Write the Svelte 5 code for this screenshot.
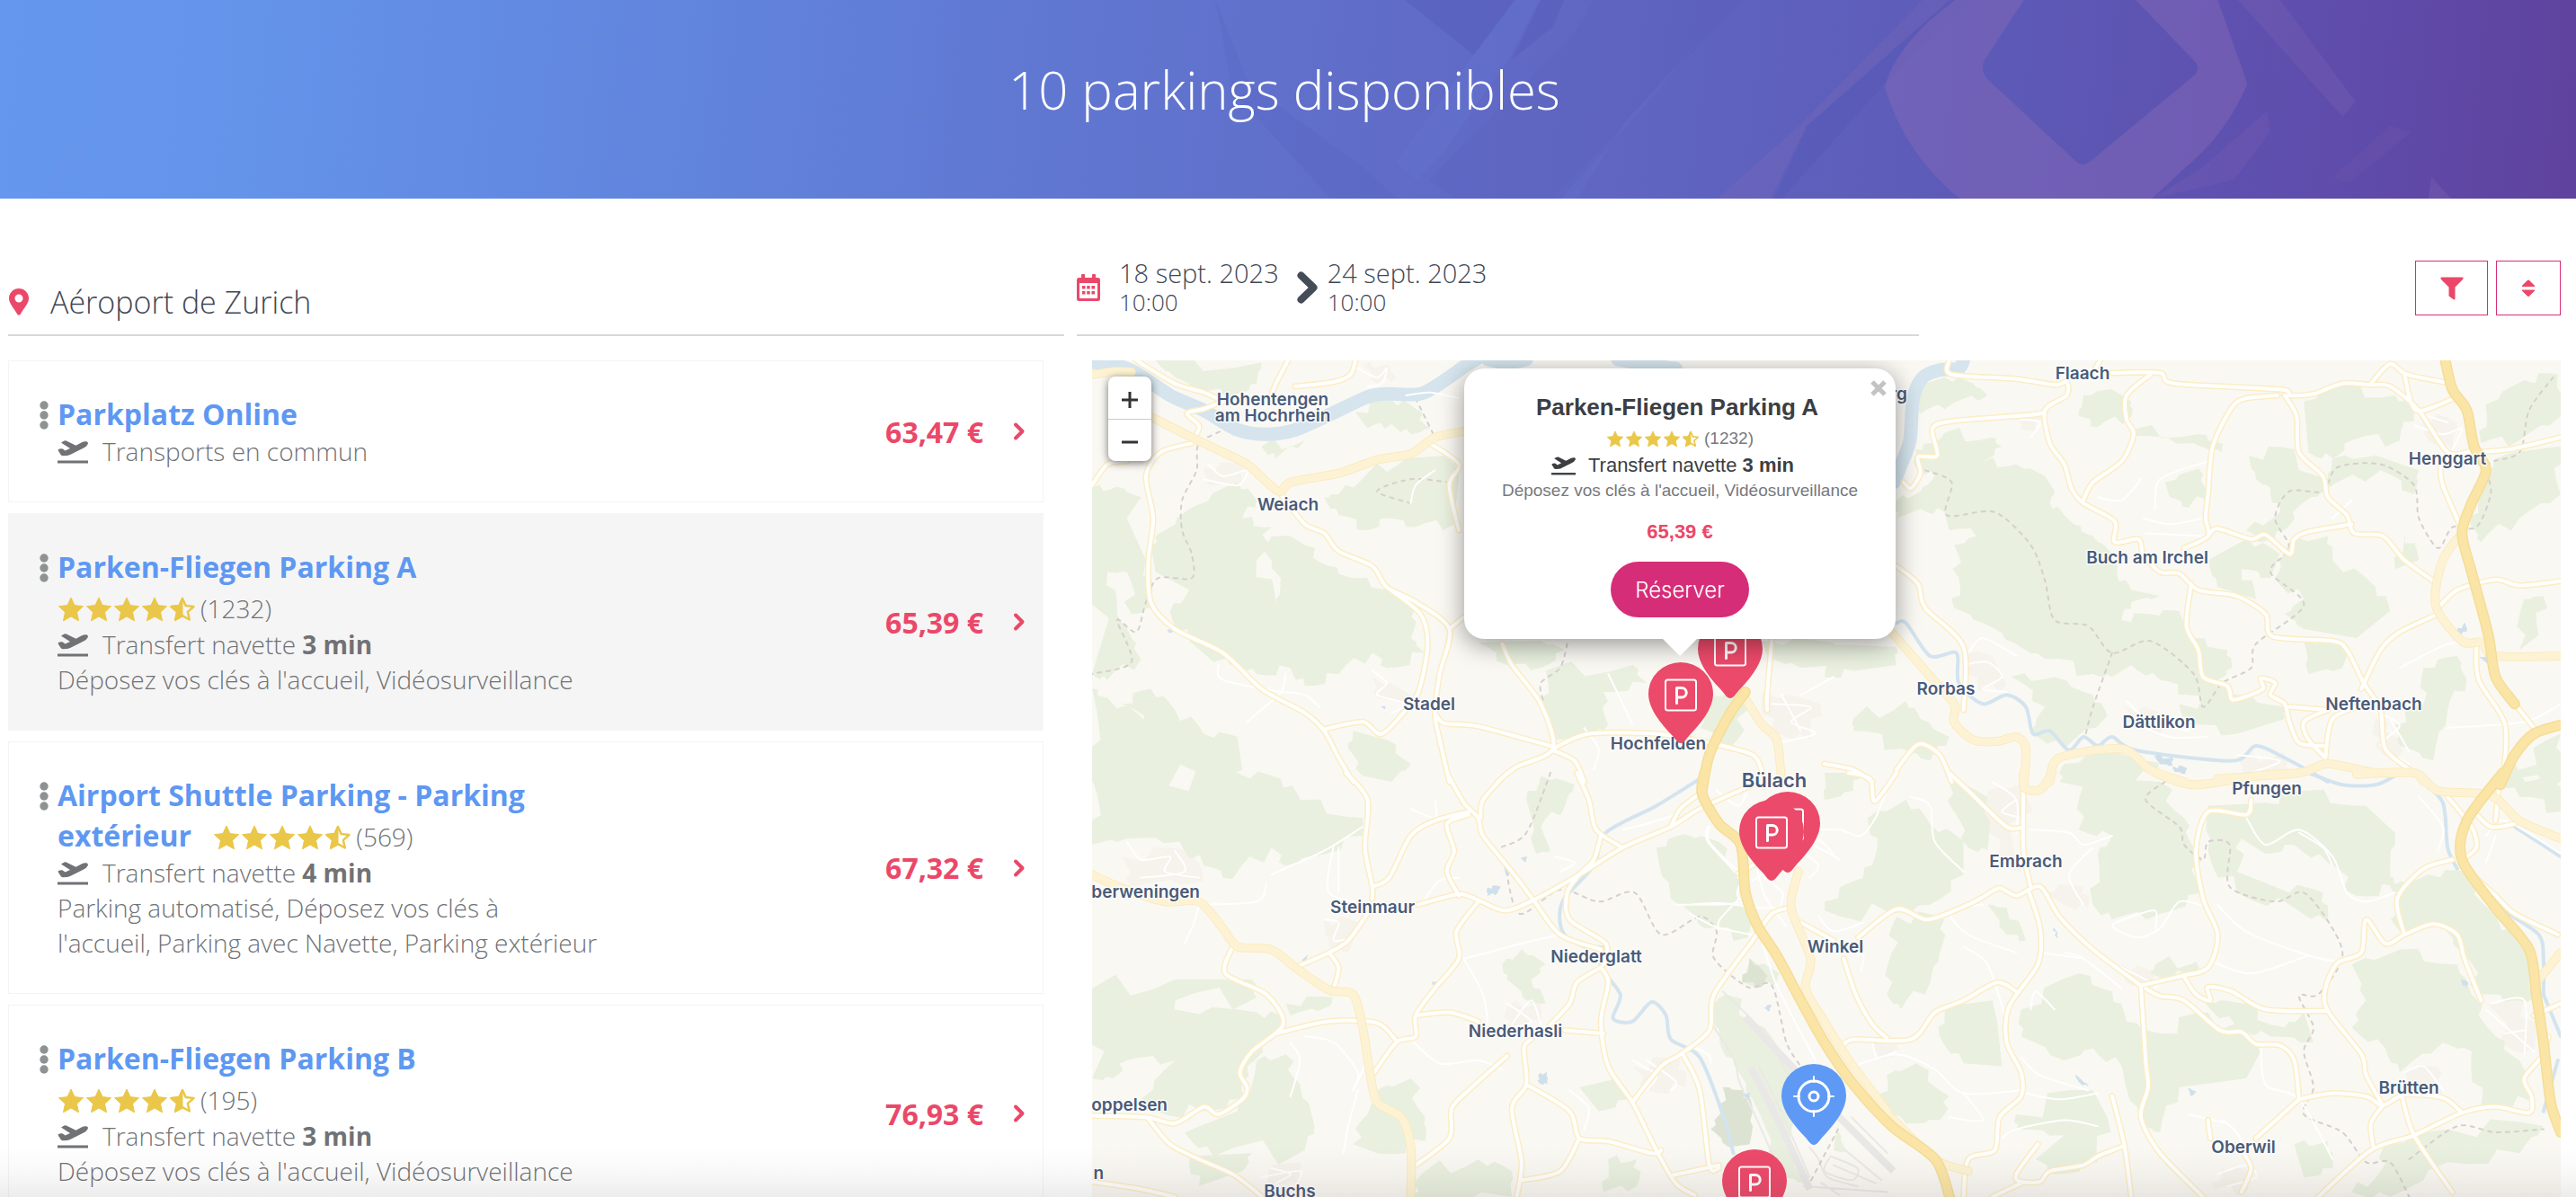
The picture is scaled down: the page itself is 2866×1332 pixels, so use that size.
<script>
  // ---- listing -------------------------------------------------------------
  const parkings = [
    { name: 'Parkplatz Online', transfer: 'Transports en commun', price: '63,47 €' },
    {
      name: 'Parken-Fliegen Parking A',
      reviews: 1232,
      transfer: 'Transfert navette',
      minutes: 3,
      features: "Déposez vos clés à l'accueil, Vidéosurveillance",
      price: '65,39 €',
      active: true
    },
    {
      name: 'Airport Shuttle Parking - Parking extérieur',
      reviews: 569,
      transfer: 'Transfert navette',
      minutes: 4,
      features: "Parking automatisé, Déposez vos clés à\nl'accueil, Parking avec Navette, Parking extérieur",
      price: '67,32 €'
    },
    {
      name: 'Parken-Fliegen Parking B',
      reviews: 195,
      transfer: 'Transfert navette',
      minutes: 3,
      features: "Déposez vos clés à l'accueil, Vidéosurveillance",
      price: '76,93 €'
    }
  ];
  const selected = parkings[1];

  // ---- map -----------------------------------------------------------------
  // Each tile has its own grid; [offset x, offset y, scale x, scale y] places it on the map.
  const tiles = {
    nw: [-15, -11, 0.5357, 0.3333],
    ne: [815, -11, 0.5332, 0.3333],
    sw: [-15, 459, 0.5357, 0.3333],
    se: [815, 459, 0.5332, 0.3333],
    apt: [665, 449, 0.3333, 0.3333]
  };

  function project(tile, text) {
    const [ox, oy, sx, sy] = tiles[tile];
    return text.trim().split(/\s+/).map((pair) => {
      const [x, y] = pair.split(',').map(Number);
      return [ox + x * sx, oy + y * sy];
    });
  }

  const at = (p) => `${p[0].toFixed(1)} ${p[1].toFixed(1)}`;

  // Rounds the corners of a line by passing curves through its points.
  function smooth(points) {
    let d = `M${at(points[0])}`;
    for (let i = 0; i < points.length - 1; i++) {
      const a = points[i - 1] ?? points[i];
      const b = points[i];
      const c = points[i + 1];
      const e = points[i + 2] ?? c;
      const c1 = [b[0] + (c[0] - a[0]) / 7, b[1] + (c[1] - a[1]) / 7];
      const c2 = [c[0] - (e[0] - b[0]) / 7, c[1] - (e[1] - b[1]) / 7];
      d += `C${at(c1)} ${at(c2)} ${at(c)}`;
    }
    return d;
  }

  // Forest edges get small notches so that they look irregular.
  function forest(points) {
    const out = [];
    points.forEach((p, i) => {
      const q = points[(i + 1) % points.length];
      const dx = q[0] - p[0];
      const dy = q[1] - p[1];
      const k = (((i * 37 + Math.round(p[0])) % 7) - 3) / 22;
      out.push(p);
      out.push([p[0] + dx * 0.3 - dy * k, p[1] + dy * 0.3 + dx * k]);
      out.push([p[0] + dx * 0.45 + dy * k, p[1] + dy * 0.45 - dx * k]);
      out.push([p[0] + dx * 0.75 + dy * k * 0.6, p[1] + dy * 0.75 - dx * k * 0.6]);
    });
    return `M${out.map(at).join('L')}Z`;
  }

  const layer = (source, draw = smooth) =>
    Object.entries(source)
      .flatMap(([tile, shapes]) => shapes.map((s) => draw(project(tile, s))))
      .join('');

  const forests = layer(
    {
      nw: [
        '160,35 380,40 370,110 330,145 250,145 200,90',
        '575,205 650,165 700,195 730,260 690,280 650,245 600,260',
        '540,480 600,410 680,360 770,350 790,420 780,580 700,590 640,560 600,600 540,550 510,490',
        '180,600 240,520 330,440 370,500 340,560 400,590 370,700 410,860 420,760 370,640 440,620 470,650 520,720 570,760 660,800 700,860 690,960 720,1010 640,1060 610,1010 540,1080 470,1120 440,1060 370,1080 330,1040 280,1040 230,970 190,870 230,800 160,740 150,650',
        '28,460 80,455 130,490 100,560 140,700 150,860 110,880 100,740 60,740 80,880 110,960 130,1030 60,1100 28,1080',
        '28,1130 60,1160 140,1240 160,1280 90,1180 150,1130 200,1200 260,1280 330,1290 340,1400 290,1440 28,1440',
        '970,1070 1150,1050 1180,1110 1090,1140 1100,1250 1060,1290 990,1300 970,1200',
        '830,975 960,970 1010,1000 960,1060 890,1050',
        '570,1270 640,1300 690,1380 650,1440 590,1420 560,1330',
        '1310,1180 1360,1110 1390,1200 1350,1330 1290,1260',
        '380,320 470,300 410,360',
        '1420,970 1568,975 1568,1050 1500,1060 1430,1020'
      ],
      ne: [
        '210,110 250,90 310,110 340,150 270,175 200,210 190,180',
        '190,330 230,310 250,275 350,290 370,320 330,370 400,380 460,420 480,470 470,510 500,550 520,580 560,620 600,680 610,750 640,800 700,820 640,840 620,900 680,880 740,870 770,960 840,1000 850,1060 820,1100 850,1130 830,1190 760,1150 700,1100 640,1050 600,1090 560,1080 460,1030 400,980 330,910 270,860 280,760 270,650 340,610 260,600 250,540 200,530 150,560 150,500 200,470 230,420 190,390',
        '540,150 600,130 640,170 640,220 570,255 530,220',
        '640,265 780,280 830,310 830,340 770,310 650,285',
        '1000,170 1080,120 1190,150 1230,200 1200,300 1100,300 1060,360 1010,340',
        '885,350 980,330 990,400 1050,430 1060,360 1150,350 1240,400 1230,480 1160,400 1040,470 990,520 960,600 910,640 880,600 950,540 930,460 900,430',
        '710,440 780,395 800,470 760,525 720,490',
        '800,700 880,630 950,680 930,760 870,730 900,830 820,790',
        '970,640 1050,620 1060,700 1150,790 1180,870 1110,960 1000,930 960,880 1000,830 940,760',
        '1380,180 1460,100 1530,80 1536,220 1450,300 1370,310',
        '1370,400 1440,340 1536,320 1536,480 1450,560 1370,640 1350,590 1360,480',
        '1250,1060 1320,1020 1340,1100 1300,1200 1270,1370 1200,1320 1190,1250 1250,1180',
        '390,1090 480,1090 560,1150 590,1220 500,1330 430,1270 460,1190',
        '500,1380 600,1340 670,1370 740,1440 490,1440',
        '60,1230 170,1170 200,1230 260,1290 220,1370 160,1330 60,1270',
        '0,980 150,990 150,1050 60,1070 0,1090',
        '740,1180 860,1150 960,1190 960,1230 860,1280 760,1250',
        '1450,1400 1536,1280 1536,1440 1430,1440',
        '1460,830 1500,820 1490,950 1450,1000',
        '1000,970 1090,980 1080,1060 1010,1080',
        '1190,730 1210,610 1240,700'
      ],
      sw: [
        '28,20 180,40 330,0 420,20 460,90 590,150 590,210 480,280 430,310 400,250 320,355 260,310 210,230 100,220 28,240',
        '930,90 960,10 1030,40 1010,110 960,180 980,260 950,270',
        '1200,250 1260,205 1330,230 1370,330 1370,400 1410,480 1390,550 1300,520 1260,450 1230,420',
        '28,720 200,690 360,690 370,750 200,760 200,790 370,800 430,820 400,880 350,980 340,1090 260,1130 160,1130 130,1090 200,960 100,960 70,1020 28,1020',
        '370,960 430,940 460,1040 490,1180 470,1260 280,1280 220,1200 330,1130',
        '620,1060 690,1020 720,1150 720,1230 620,1270 570,1240 600,1140',
        '880,640 920,590 970,640 940,690 970,770 940,770 890,690',
        '1040,1050 1120,1020 1140,1090 1080,1130',
        '720,1330 830,1290 900,1330 900,1416 690,1416',
        '230,1280 360,1270 340,1330 250,1380',
        '1100,1290 1160,1290 1160,1380 1090,1400',
        '430,770 530,750 520,780 440,810'
      ],
      se: [
        '90,150 170,90 220,170 290,230 290,340 220,440 140,470 0,460 0,430 80,350 110,250',
        '150,480 250,490 240,600 220,700 160,790 130,740 140,600',
        '250,0 340,80 340,260 300,250 270,130',
        '540,40 700,30 750,150 770,250 790,400 700,470 600,490 560,440 570,270 600,210 530,190',
        '800,110 920,100 1000,60 1130,110 1190,200 1180,330 1190,380 1110,410 1050,300 980,240 920,270 870,220 860,330 940,380 1040,400 1050,500 980,450 860,400 800,260',
        '1180,380 1260,340 1340,330 1400,470 1480,600 1470,690 1490,760 1440,760 1370,740 1330,600 1280,500 1200,530',
        '1100,640 1200,590 1320,640 1350,740 1400,880 1450,960 1480,1100 1370,1110 1350,930 1290,900 1200,1000 1170,920 1100,850 1130,760',
        '410,790 530,670 600,730 630,830 700,870 800,800 910,930 880,1020 740,1050 700,1200 660,1180 620,980 560,920 500,960 410,880',
        '130,1010 190,970 260,1080 240,1160 170,1170 120,1100',
        '250,780 350,760 360,830 370,980 290,970 240,880',
        '400,1140 560,1060 590,1150 570,1300 480,1340 440,1290 500,1210 400,1190',
        '1170,1240 1300,1190 1500,1180 1450,1270 1300,1300 1180,1416 1100,1400 1160,1330',
        '980,1240 1050,1230 1060,1320 1000,1350',
        '1400,0 1536,0 1536,130 1450,80',
        '0,0 70,0 60,60 0,90',
        '690,640 790,620 760,680 680,670',
        '790,760 870,770 960,850 1000,800 1020,900 930,880 860,850',
        '340,440 380,450 420,560 380,540'
      ],
      apt: [
        '75,800 120,770 250,880 340,1010 380,1100 330,1280 390,1400 300,1380 210,1120 150,1010 100,930',
        '200,650 300,700 280,740 180,730',
        '490,1220 530,1300 480,1290'
      ]
    },
    forest
  );

  const thickets = layer({ apt: ['200,650 260,710 240,745 175,730', '110,1080 180,1090 210,1160 200,1270 130,1280 70,1220 110,1160'] }, forest);

  const villages = layer(
    {
      nw: ['590,50 640,45 660,90 620,110', '260,390 340,380 340,440 270,450', '610,1090 690,1150 680,1180 620,1160', '1420,1140 1540,1180 1520,1300 1440,1270'],
      ne: ['410,220 450,210 440,270 410,260', '1240,220 1320,240 1310,330 1260,300', '290,1000 350,1020 380,1120 320,1140', '620,1180 720,1230 700,1280 640,1250', '1150,1230 1210,1300 1190,1370 1150,1320', '860,1360 960,1340 960,1410 880,1420'],
      sw: ['90,280 240,260 260,360 110,380', '510,490 580,500 560,600 520,580', '890,780 960,760 960,830 890,850', '400,1310 460,1300 460,1370 390,1370', '1150,980 1250,960 1260,1050 1180,1060'],
      se: ['340,60 410,40 410,330 360,300', '450,390 540,380 550,450 500,440', '620,640 690,670 680,710 630,700', '830,1320 890,1330 880,1400 810,1390', '1210,990 1280,980 1290,1070 1220,1070', '1380,770 1460,760 1480,930 1440,930', '100,890 160,900 140,950 110,950']
    },
    forest
  );

  const streets = layer({
    nw: [
      '580,60 620,90 640,60 630,110 600,120', '270,380 300,420 350,400 330,450 260,430', '610,1070 640,1110 620,1150 680,1180 650,1210', '350,1240 420,1140 430,1080', '420,1140 470,1150 500,1190',
      '290,1050 300,1100 420,1140', '1050,1260 1080,1330 1070,1400', '1440,1180 1520,1190 1480,1240 1530,1280 1450,1310', '1460,1150 1500,1270', '680,150 730,140 790,160',
      '740,400 700,450 690,510', '1500,1150 1568,1090', '1100,1080 1130,1180 1150,1250'
    ],
    ne: [
      '410,230 450,240 430,290', '1230,250 1290,280 1330,260 1310,330', '1240,210 1300,240', '570,490 620,500 660,430', '690,530 700,430 800,370', '665,560 720,580 790,560', '670,610 790,620',
      '290,1050 340,1040 370,1090 330,1130 380,1140', '300,1010 330,960 400,1020', '630,1170 680,1240 760,1270', '640,1240 720,1290 800,1290', '1200,1060 1300,980 1360,980', '1140,1200 1200,1250 1160,1320 1220,1380', '1180,1230 1220,1340',
      '1100,500 1060,560', '860,1350 950,1370 890,1410', '1300,1260 1460,1240 1536,1180', '1460,1240 1480,1260'
    ],
    sw: [
      '100,230 130,290 190,280 180,330 250,350', '200,260 220,330 130,350', '250,440 370,430 390,370', '250,440 240,500 220,570', '510,490 540,500 530,560 570,550', '530,240 520,400 610,440',
      '400,340 510,260 590,180', '690,120 740,150 740,90', '720,420 750,360 790,350', '800,620 850,600 920,570 1000,540', '800,620 840,740 850,840', '690,890 750,970 830,960 880,990', '890,770 940,830 900,850', '900,840 940,760 960,840',
      '990,280 1030,300 1000,330', '1130,190 1180,170 1240,140', '1150,960 1200,1010 1180,1060', '1180,960 1240,1030 1230,1060', '400,1320 440,1340 410,1370', '380,1350 460,1330 450,1380', '470,880 530,900 580,1000 570,1060 600,960',
      '440,900 460,960 440,1080', '1020,1060 1060,1120 1050,1190', '1240,440 1330,440 1390,430', '1310,180 1310,230 1370,330', '540,250 540,400', '550,1270 560,1180 580,1060'
    ],
    se: [
      '350,30 400,90 400,200', '430,190 510,200 540,240 600,210', '400,90 370,130 410,150', '540,440 510,340 560,250', '330,440 260,460 300,540 400,600', '180,80 220,110 230,230 290,330', '640,480 600,510 650,550 700,520 740,430 800,450',
      '640,480 690,460 690,520', '820,440 880,530 1010,610 1070,630', '810,630 890,670 1010,610', '880,150 920,240 990,190 1060,280 1090,400 1130,430 1190,400', '990,200 1040,250 1060,310', '620,650 680,700 650,710', '700,700 690,720',
      '60,980 150,940 230,990 290,1070 410,1060', '290,1070 330,1160 260,1150', '410,950 450,1010 550,1060', '420,1070 490,1090 570,1070', '370,1220 400,1190 500,1160 570,1180', '910,900 920,1040 990,1090 1060,1290', '830,1160 860,1200 880,1270',
      '760,1140 840,1170', '820,1340 880,1310 900,1350 840,1380', '1210,1000 1250,980 1290,1060', '1390,770 1460,760 1460,940', '1380,790 1480,930', '1420,870 1460,860', '100,900 110,950 150,930', '430,790 440,730 480,790',
      '1240,80 1290,180 1280,260', '1380,210 1420,160 1536,270', '1380,300 1400,210', '500,600 540,620 620,720', '450,600 540,620', '290,580 340,640 380,830'
    ],
    apt: [
      '60,210 60,260 165,380 160,440 230,560 290,740 420,990', '0,470 100,465 230,480 330,480', '0,500 90,545 230,575', '95,550 100,520 165,450', '220,330 250,440 320,540', '250,380 310,430 300,480', '370,290 430,340 400,380',
      '380,260 450,290 500,320', '390,230 440,260 480,300', '430,220 500,220 570,240 620,180 660,80', '430,510 480,560 580,530', '530,630 580,640 570,690', '210,390 270,350 320,320', '90,90 160,140 190,100', '0,940 60,970 70,1000'
    ]
  });

  const minorRoads = layer({
    nw: [
      '120,33 200,110 260,140 300,170', '435,33 410,110 400,150', '575,33 565,80 530,105 450,120', '300,170 260,195 225,210 250,250 245,280 235,300',
      '235,310 170,340 140,420 155,560 145,700 150,840 200,930 300,1010 380,1130 470,1210 510,1270 540,1360 570,1440',
      '420,480 470,580 510,610 540,670 610,720 640,790 700,840 770,930 750,1080 740,1210 750,1300 770,1440',
      '640,790 710,880 725,980 710,1120 690,1180 630,1280 590,1240 510,1265', '740,1210 760,1245 830,1255 980,1320', '770,930 800,890',
      '880,980 900,1050 960,1180 985,1330 910,1390 870,1440', '985,1330 1060,1280 1200,1280 1310,1310', '985,1335 1030,1370 1050,1440', '1310,1310 1400,1350 1420,1410',
      '1440,960 1430,1150 1430,1200', '28,450 60,380 100,370', '730,310 790,380 770,450 790,600'
    ],
    ne: [
      '260,33 265,80 400,95 480,115 505,105 505,150 460,200 470,310 500,380 515,460 540,510 605,570 605,640 655,630 665,680 700,740 740,745 780,800 860,820 920,880 935,955 1060,970 1090,1000 1125,1110 1160,1200 1170,1330 1230,1410',
      '460,205 430,215 270,235 225,260 235,350 195,355 200,410 180,460 165,440', '600,75 700,75 730,110 950,130 970,150 1020,145 1080,110 1140,115 1180,120 1240,200 1300,340 1350,335',
      '680,80 630,150 630,230 645,280 620,370 560,440 540,500', '945,150 880,160 850,190 810,320 800,480 795,560 800,620 750,660', '960,150 985,220 990,340 1040,420 1050,490 1090,550 1105,610 1165,620 1210,700 1280,780',
      '800,620 820,595 890,630 920,615 970,680 980,630 1010,605 1100,580', '1140,110 1180,45 1215,80 1300,108', '1210,80 1235,200 1320,155', '1285,390 1290,450 1330,600',
      '765,780 755,920 780,1000 790,1090 840,1120 850,1165 880,1155 915,1130 910,1095 940,1110 930,1150 960,1180 970,1240 990,1310 1040,1320', '970,1190 1050,1200', '1130,1180 1060,1230 1045,1360', '1050,1200 1000,1240 1010,1300 1045,1360',
      '1120,1130 1160,1000 1200,940 1280,880', '1280,860 1320,800 1400,765 1450,785 1536,770', '1350,340 1430,330 1536,290', '1360,980 1365,1100 1420,1250 1415,1440',
      '150,720 195,780 210,860 290,990 290,1200', '0,1380 60,1400 100,1440', '150,1400 195,1315 240,1350 265,1440', '1440,1180 1480,1260', '575,33 565,60'
    ],
    sw: [
      '555,0 600,90 595,250 610,380 610,420', '600,470 560,560 520,600 450,650', '520,600 540,650 530,720', '610,380 645,350 690,210 740,160 810,130', '765,0 800,100 830,150 840,210 900,330 945,425 1000,540 1085,590',
      '890,0 840,90 835,150', '810,140 765,170 780,260 765,330 790,410', '705,440 790,405 830,425 885,460 945,425 1040,340 1130,250 1230,180 1290,120 1400,40', '830,430 785,530 790,620 740,720 700,810 700,880 660,900 610,1010',
      '700,810 770,800 830,830', '1035,0 1060,90 1075,190 1130,250', '1085,210 1070,290 1040,340 1015,400 1020,490 1095,570 1090,640', '1085,650 1035,700 1020,770 980,840', '1085,650 1100,700 1085,830 1100,980 1150,1100 1200,1260 1240,1370 1280,1410',
      '1010,860 1090,870', '1150,1100 1210,980 1250,940 1310,860 1320,740 1400,560 1440,470 1480,450', '1255,940 1290,1060 1310,1310 1330,1320', '1230,1345 1330,1310', '940,890 925,920 930,1040 900,1120 920,1300 910,1416',
      '935,1045 1020,1130 1040,1220 1100,1230 1190,1270 1210,1260', '1040,1220 1000,1330 920,1360', '890,945 810,1060 775,1120 770,1220 700,1310', '320,580 305,670 390,740 425,840 360,930 335,1000 350,1050 340,1090 290,1140 260,1115 200,1170 140,1150 28,1145',
      '410,870 520,830 620,835 660,895', '145,1155 190,1240 250,1290 320,1340 370,1400 380,1416', '28,1365 130,1390 200,1416', '1230,180 1250,120 1290,70', '1370,335 1410,300', '1500,500 1568,560'
    ],
    se: [
      '50,0 95,20 105,95 150,0', '260,0 300,60 380,180 415,180', '415,55 415,260 430,380', '70,550 150,455 215,490 300,440 330,415 365,385 400,410 450,380 490,480 560,590 660,710',
      '425,390 450,520 445,640 385,780 380,900 410,1000 410,1080 365,1150 355,1260 300,1290 290,1416', '40,620 65,740 100,840 130,885', '35,920 60,890 180,890 230,800 290,760 360,700 400,730',
      '660,710 740,680 800,650 820,540 790,420 775,260 800,130 880,140 890,90', '660,710 670,960 675,1050 660,1150 700,1270 790,1416', '670,720 700,745 750,760 825,860 870,865 900,905 950,910 980,960 990,1090',
      '750,680 775,740 805,760 800,715 850,730 920,790 1050,795', '1370,760 1335,620 1320,540 1270,505 1210,540 1170,570 1130,490 1120,600 1070,635 1045,720 1050,795 1120,940 1130,1010 1165,1110', '1210,540 1195,420 1250,320 1310,290',
      '990,1090 900,1220', '990,1090 1060,1070 1130,1080 1165,1110 1210,1075 1290,1085 1330,1135', '1165,1110 1140,1170 1145,1250', '1205,1080 1230,1210 1310,1400',
      '1030,1416 1140,1260 1230,1210 1330,1135 1400,1115 1470,1135 1475,1080 1460,1020 1500,940 1510,880', '600,1080 625,1240 640,1416', '625,1245 570,1280 540,1310 470,1330 450,1365 410,1365 400,1340 445,1240', '410,1370 350,1416',
      '800,1160 805,1220', '870,1260 890,1320 870,1400', '1330,310 1400,410 1440,470 1530,540', '1300,80 1350,180 1360,250 1330,290', '1350,120 1390,180 1440,170', '1410,0 1400,160', '1480,810 1536,770'
    ]
  });

  const mainRoads = layer({
    nw: ['28,80 80,70 110,72', '155,225 235,290 300,340 350,380 415,470 440,440 540,410 620,365 690,345 740,290 800,270', '1380,1150 1420,1250 1450,1300 1460,1440'],
    ne: [
      '140,940 210,1070 270,1180 270,1240 310,1300 360,1305 400,1290 420,1330 415,1460', '470,1440 490,1360 620,1330 680,1400 750,1440', '820,1430 990,1410 1050,1380 1150,1410 1230,1410 1250,1440',
      '1330,610 1290,700 1275,850 1330,970 1370,975 1400,1020 1536,1020'
    ],
    sw: ['28,340 90,385 180,430 250,430 300,520 330,580 400,590 450,650 520,725 570,740 590,850 605,1000 620,1100 670,1150 690,1250 690,1416', '1495,330 1480,450 1520,620 1510,720 1549,830 1600,960 1680,1130'],
    se: ['415,0 415,45 435,60 455,50 475,0', '690,0 770,40 900,10 990,0', '1110,5 1230,0 1280,60 1390,75 1450,160 1536,220', '1490,690 1536,600', '140,1150 230,1290 300,1330']
  });

  const motorways = layer({
    nw: ['1385,1140 1350,1220 1310,1350 1295,1470'],
    ne: ['1295,33 1310,130 1340,200 1355,320 1380,400 1350,510 1330,610 1350,740 1385,950 1400,1090 1440,1180', '1536,1250 1480,1280 1440,1350 1410,1450'],
    sw: ['1300,0 1295,70 1330,170 1375,240 1385,400 1410,510 1450,610 1500,760 1549,900 1609,1040 1689,1180 1779,1290 1809,1416'],
    se: ['1415,0 1340,160 1330,290 1400,450 1470,590 1485,740 1500,900 1515,1100 1536,1200']
  });

  const rivers = layer({
    nw: ['28,40 70,45 120,75 190,150 260,200 330,265 390,280 450,265 520,215 600,155 640,145 710,145 760,100 800,55 830,25', '850,30 890,42 930,30', '1120,30 1190,50 1240,60'],
    ne: ['290,30 280,60 240,65 205,90 185,160 178,300 160,380 145,440']
  });

  const streams = layer({
    ne: ['150,910 170,910 220,1020 275,1010 280,1110 330,1180 380,1150 420,1190 435,1280 470,1270 510,1335 540,1290 570,1320 600,1290 650,1335 850,1370 900,1320 960,1360 1050,1440'],
    sw: ['1290,20 1200,110 1095,200 1070,310 1005,430 1005,530 1050,580 1090,585 1085,650 1125,740 1110,820 1150,830 1190,765 1220,810 1230,890 1290,950 1340,1150 1360,1270'],
    se: ['1010,0 1080,40 1150,40 1190,10', '1240,20 1290,100 1300,250 1320,320', '1340,330 1420,460 1490,540 1500,620 1500,740', '1440,180 1536,280', '1500,740 1536,880', '1530,960 1500,1130']
  });

  const ponds = layer(
    {
      nw: ['630,1190 636,1188 636,1196', '185,935 200,935 190,942'],
      ne: ['690,1355 725,1360 725,1385 700,1380', '728,1390 755,1395 752,1412 730,1405', '1320,940 1335,910 1340,930 1328,950', '1368,1025 1384,1025 1384,1045'],
      sw: ['850,385 875,380 870,400 850,410', '885,315 895,320 892,345', '955,1010 972,1000 972,1038 957,1035', '920,285 930,280 928,298', '465,625 475,610 470,630', '735,700 742,698 738,710'],
      se: ['478,520 484,540 486,550', '1330,690 1342,700 1338,720', '710,1290 730,1330 720,1320', '760,1055 775,1065 765,1078', '525,1010 545,1040 550,1045 530,1030'],
      apt: ['180,1105 200,1100 195,1120', '250,815 270,805 265,825']
    },
    forest
  );

  const borders = layer({
    nw: ['310,260 250,310 245,400 215,500 215,600 235,680 235,760 165,760 140,840 120,940 80,900 110,1040 28,1080', '700,160 740,290', '690,510 620,470 690,430 770,440', '1015,980 1000,1060 960,1110 965,1170'],
    ne: [
      '210,400 265,440 255,550 355,540 430,650 460,770 480,900 550,920 600,1010 680,970 770,1080 790,1190 830,1110 890,1060 900,980 1000,850 930,740 970,660 940,560 970,470 1040,470 1070,390 1160,380 1230,450 1240,560 1280,660 1310,590 1360,590 1390,480 1385,380 1450,340 1470,200 1520,90',
      '600,1010 560,1190 545,1280'
    ],
    sw: ['980,0 930,200 875,250', '885,300 915,470 1000,390 1080,430 1155,400 1210,540 1290,480 1325,530 1320,620 1390,715 1440,710 1470,900 1500,980'],
    se: [
      '710,30 670,90 740,180 750,240 790,290 800,230 845,240 845,380 940,430 1000,400 1060,520 1080,620 1030,740 990,745 1020,850 1000,930 1020,1050 1000,1140 1080,1200 1130,1300 1180,1300 1220,1416',
      '1220,1290 1320,1180 1400,1200 1500,1190'
    ],
    apt: ['495,1220 400,1400']
  });

  const runways = layer({ apt: ['185,845 340,1010 500,1180 680,1360', '205,1015 290,1180 400,1420'] });
  const taxiways = layer({
    apt: [
      '110,760 240,890 330,1040', '75,870 150,990 165,1060 230,1200 300,1360', '230,1010 300,1150 400,1380', '400,1280 430,1320 460,1380 560,1410', '470,1310 560,1350 540,1390 450,1360 470,1310', '520,1290 640,1390',
      '480,1340 620,1400', '380,1410 660,1430', '540,1180 660,1300', '440,1400 500,1440'
    ]
  });

  const places = [
    ['Hohentengen', 201, 50], ['am Hochrhein', 201, 68], ['Weiach', 218, 167], ['Stadel', 375, 389], ['Hochfelden', 630, 433],
    ['Bülach', 759, 475, 'town'], ['Steinmaur', 312, 615], ['Niederglatt', 561, 670], ['Niederhasli', 471, 753], ['Buchs', 220, 931],
    ['Winkel', 827, 659], ['Flaach', 1102, 21], ['Henggart', 1508, 116], ['Buch am Irchel', 1174, 226], ['Rorbas', 950, 372],
    ['Dättlikon', 1187, 409], ['Neftenbach', 1426, 389], ['Embrach', 1039, 564], ['Pfungen', 1307, 483], ['Brütten', 1465, 816],
    ['Oberwil', 1281, 882], ['berweningen', 120, 598, 'cut'], ['oppelsen', 84, 835, 'cut'], ['n', 13, 911, 'cut'], ['rg', 907, 44, 'cut']
  ];

  // Left and top edge of each marker, in map pixels.
  const markers = [
    { x: 674, y: 286, kind: 'parking', label: 'Parken-Fliegen Parking B' },
    { x: 619, y: 336, kind: 'parking', label: 'Parken-Fliegen Parking A' },
    { x: 738, y: 480, kind: 'parking', label: 'Parkplatz Online' },
    { x: 720, y: 489, kind: 'parking', label: 'Airport Shuttle Parking' },
    { x: 767, y: 783, kind: 'airport', label: 'Aéroport de Zurich' },
    { x: 701, y: 878, kind: 'parking', label: 'Parking Zurich' }
  ];

  let location = $state('Aéroport de Zurich');
</script>

{#snippet star()}
  <svg class="star" viewBox="0 0 30 28" aria-hidden="true">
    <path d="M15 1 L19 9.600 L28.500 10.700 L21.500 17.200 L23.500 26.800 L15 22 L6.500 26.800 L8.500 17.200 L1.500 10.700 L11 9.600 Z" />
  </svg>
{/snippet}

{#snippet stars()}
  <span class="stars" role="img" aria-label="4,5 sur 5">
    {@render star()}{@render star()}{@render star()}{@render star()}
    <svg class="star half" viewBox="0 0 30 28" aria-hidden="true">
      <path class="outline" d="M15 2 L18.600 10 L27.500 11 L20.900 16.900 L22.800 25.500 L15 21.200 L7.200 25.500 L9.100 16.900 L2.500 11 L11.400 10 Z" />
      <path d="M15 1 V22 L6.500 26.800 L8.500 17.200 L1.500 10.700 L11 9.600 Z" />
    </svg>
  </span>
{/snippet}

{#snippet plane()}
  <svg class="plane" viewBox="0 0 34 26" aria-hidden="true">
    <path d="M0 22.500 h34 v3 h-34 z" />
    <path d="M1.500 9.800 L4 9.200 Q5 9 5.800 9.600 L8.500 11.600 L14 9 L4.600 3 Q3.900 2.400 4.800 1.900 L7.600 0.600 Q8.600 0.100 9.700 0.500 L20.500 5.700 L26.500 2.600 Q29.500 1 32.300 1.300 Q34.500 1.900 33.700 4.200 Q32.400 6.800 29 8.500 L14.600 15.800 Q12.800 16.800 10.500 17 L6.200 17.300 Q4.600 17.300 3.600 16.100 L0.800 11.400 Q0.300 10.200 1.500 9.800 Z" />
  </svg>
{/snippet}

<div class="page">
  <header class="hero">
    <svg class="hero-art" viewBox="0 0 1568 663" preserveAspectRatio="none" aria-hidden="true">
      <g fill="#5558b4" opacity="0.35">
        <path d="M855 0 H922 L897 183 Z" />
        <path d="M938 0 H952 L945 90 L920 200 Z" />
        <path d="M740 0 L760 280 L830 560 L850 663 H810 L750 300 Z" opacity="0.4" />
        <path d="M960 100 L870 600 L885 663 H945 L1060 0 H970 Z" opacity="0.3" />
        <path d="M1187 0 H1200 L1147 280 L1085 663 H1080 L1100 420 Z" />
      </g>
      <g fill="#8a6cb8">
        <path opacity="0.42" d="M1190 0 H1232 L1208 200 Q1205 230 1209 260 L1264 540 Q1268 560 1272 540 L1336 250 Q1340 225 1335 200 L1300 0 H1350 L1368 280 Q1355 450 1330 560 L1310 663 H1193 Q1160 520 1147 290 Q1155 140 1190 0 Z" />
        <path opacity="0.22" d="M1170 0 H1187 L1100 420 L1078 663 H1045 L1095 420 Z" />
        <path opacity="0.22" d="M1362 0 H1388 L1434 340 L1426 390 Z" />
        <path opacity="0.18" d="M1340 560 L1380 370 L1382 440 L1360 600 L1310 663 Z" />
        <path opacity="0.12" d="M1455 420 L1420 590 L1430 610 L1468 440 Z" />
        <path opacity="0.25" d="M1480 590 L1492 663 H1478 Z" />
      </g>
      <g fill="#7191ea" opacity="0.2">
        <path d="M922 0 H937 L918 200 L880 500 L862 600 L850 540 L897 183 Z" opacity="0.6" />
        <path d="M62 424 L50 520 L25 640 L40 500 Z" />
        <path d="M1040 100 L990 400 L960 663 H950 L1000 360 Z" opacity="0.6" />
      </g>
    </svg>
    <h1>10 parkings disponibles</h1>
  </header>

  <form class="search">
    <label class="field place">
      <svg class="pin-icon" viewBox="0 0 22 30" aria-hidden="true">
        <path fill-rule="evenodd" d="M11 0 A11 11 0 0 1 22 11 C22 16 18 20 12.500 29 Q11 30.500 9.500 29 C4 20 0 16 0 11 A11 11 0 0 1 11 0 Z M11 6.500 A4.500 4.500 0 1 0 11 15.500 A4.500 4.500 0 1 0 11 6.500 Z" />
      </svg>
      <input type="text" aria-label="Aéroport" bind:value={location} />
    </label>

    <button type="button" class="field dates">
      <svg class="calendar" viewBox="0 0 26 30" aria-hidden="true">
        <path fill-rule="evenodd" d="M5 1 Q5 0 6 0 H8 Q9 0 9 1 V4 H17 V1 Q17 0 18 0 H20 Q21 0 21 1 V4 H23.500 Q26 4 26 6.500 V27.500 Q26 30 23.500 30 H2.500 Q0 30 0 27.500 V6.500 Q0 4 2.500 4 H5 Z M3 10 V26 Q3 27 4 27 H22 Q23 27 23 26 V10 Z" />
        <path d="M6 13 h3.500 v3.500 h-3.500z M11.200 13 h3.500 v3.500 h-3.500z M16.500 13 h3.500 v3.500 h-3.500z M6 19 h3.500 v3.500 h-3.500z M11.200 19 h3.500 v3.500 h-3.500z M16.500 19 h3.500 v3.500 h-3.500z" />
      </svg>
      <span class="date">18 sept. 2023<small>10:00</small></span>
      <svg class="arrow" viewBox="0 0 24 36" aria-hidden="true"><path d="M4.500 4.500 L18.500 18 L4.500 31.500" /></svg>
      <span class="date">24 sept. 2023<small>10:00</small></span>
    </button>

    <div class="actions">
      <button type="button" class="filter" aria-label="Filtrer">
        <svg viewBox="0 0 26 26" aria-hidden="true"><path d="M1.500 0.500 H24.500 Q26.500 1 25 3 L16.500 11.500 V24.500 Q16 26.300 14.500 25 L10.200 22 Q9.500 21.500 9.500 20.500 V11.500 L1 3 Q-0.500 1 1.500 0.500 Z" /></svg>
      </button>
      <button type="button" class="sort" aria-label="Trier">
        <svg viewBox="0 0 16 20" aria-hidden="true"><path d="M1.200 8 H14.800 Q15.500 7.500 14.900 6.800 L8.800 0.800 Q8 0.100 7.200 0.800 L1.100 6.800 Q0.500 7.500 1.200 8 Z M1.200 11.500 H14.800 Q15.500 12 14.900 12.700 L8.800 18.700 Q8 19.400 7.200 18.700 L1.100 12.700 Q0.500 12 1.200 11.500 Z" /></svg>
      </button>
    </div>
  </form>

  <main class="results">
    <section class="list" aria-label="Parkings">
      {#each parkings as p}
        <article class="card" class:active={p.active}>
          <svg class="dots" viewBox="0 0 10 32" aria-hidden="true"><circle cx="5" cy="5" r="4.700" /><circle cx="5" cy="16" r="4.700" /><circle cx="5" cy="27" r="4.700" /></svg>
          <div class="details">
            <h2>
              <a href="#reserver">{p.name}</a>{' '}
              {#if p.reviews}<span class="rating">{@render stars()}({p.reviews})</span>{/if}
            </h2>
            <p class="transfer">{@render plane()}<span>{p.transfer}{#if p.minutes}{' '}<b>{p.minutes} min</b>{/if}</span></p>
            {#if p.features}<p class="extras">{p.features}</p>{/if}
          </div>
          <strong class="price">{p.price}</strong>
          <button type="button" class="go" aria-label="Choisir {p.name}">
            <svg viewBox="0 0 16 22" aria-hidden="true"><path d="M4 3.500 L11.500 11 L4 18.500" /></svg>
          </button>
        </article>
      {/each}
    </section>

    <section class="map" aria-label="Carte">
      <svg class="ground" aria-hidden="true">
        <path class="village" d={villages} />
        <path class="forest" d={forests} />
        <path class="thicket" d={thickets} />
        <path class="runway" d={runways} />
        <path class="taxiway" d={taxiways} />
        <path class="border" d={borders} />
        <path class="river" d={rivers} />
        <path class="stream" d={streams} />
        <path class="pond" d={ponds} />
        <path class="street" d={streets} />
        <path class="minor-edge" d={minorRoads} />
        <path class="minor" d={minorRoads} />
        <path class="main-edge" d={mainRoads} />
        <path class="main" d={mainRoads} />
        <path class="motorway-edge" d={motorways} />
        <path class="motorway" d={motorways} />
        {#each places as [name, x, y, kind]}
          <text {x} {y} class={kind}>{name}</text>
        {/each}
      </svg>

      {#each markers as m}
        <button type="button" class="marker {m.kind}" aria-label={m.label} style="left: {m.x}px; top: {m.y}px">
          <svg viewBox="0 0 72 90" aria-hidden="true">
            <path class="body" d="M36 90 C33 90 31 87 27 82 C14 68 0 52 0 35 A36 35 0 0 1 72 35 C72 52 58 68 45 82 C41 87 39 90 36 90 Z" />
            {#if m.kind === 'parking'}
              <rect class="line" x="19" y="19.500" width="34" height="34" rx="2.500" />
              <path class="line letter" d="M31.500 45.500 V28.500 H37 A5.200 5.200 0 0 1 37 39 H32" />
            {:else}
              <circle class="line letter" cx="36" cy="36" r="17" />
              <circle class="line letter" cx="36" cy="36" r="5" />
              <path class="line" d="M36 14 V20 M36 52 V58 M14 36 H20 M52 36 H58" />
            {/if}
          </svg>
        </button>
      {/each}

      <div class="zoom">
        <button type="button" aria-label="Zoom avant"><svg viewBox="0 0 20 20" aria-hidden="true"><path d="M10 1 V19 M1 10 H19" /></svg></button>
        <button type="button" aria-label="Zoom arrière"><svg viewBox="0 0 20 20" aria-hidden="true"><path d="M1 10 H19" /></svg></button>
      </div>

      <div class="popup" role="dialog" aria-label={selected.name}>
        <button type="button" class="close" aria-label="Fermer"><svg viewBox="0 0 18 18" aria-hidden="true"><path d="M2 2 L16 16 M16 2 L2 16" /></svg></button>
        <h3>{selected.name}</h3>
        <p class="score">{@render stars()}({selected.reviews})</p>
        <p class="shuttle">{@render plane()}<span>{selected.transfer} <b>{selected.minutes} min</b></span></p>
        <p class="features">{selected.features}</p>
        <p class="cost">{selected.price}</p>
        <button type="button" class="book">Réserver</button>
      </div>
    </section>
  </main>
  <div class="haze"></div>
</div>

<style>
  :global(body) { background: #fff; }
  * { box-sizing: border-box; }
  h1, h2, h3, p { margin: 0; }
  button, input { font: inherit; color: inherit; background: none; border: 0; padding: 0; }
  button { cursor: pointer; }
  svg { display: block; flex: none; }

  .page {
    position: relative;
    display: flex;
    flex-direction: column;
    height: 100vh;
    overflow: hidden;
    font-family: "Open Sans", "Noto Sans", sans-serif;
    font-weight: 300;
    color: #3f4754;
  }

  .hero {
    position: relative;
    flex: none;
    display: flex;
    justify-content: center;
    padding: 61px 32px 82px 24px;
    background: linear-gradient(96deg, #6597ee 0%, #6493ea 10%, #6183dc 28%, #6076d0 42%, #6068c4 60%, #5d59b6 78%, #5f4dac 90%, #5f429e 100%);
  }
  .hero-art { position: absolute; inset: 0; width: 100%; height: 100%; }
  h1 { position: relative; font-size: 58px; line-height: 78px; font-weight: 300; color: #fff; }

  .search {
    flex: none;
    display: grid;
    grid-template-columns: 1175fr 937fr 700fr;
    gap: 14px;
    align-items: end;
    padding: 60px 17px 27px 9px;
  }
  .field { display: flex; align-items: center; height: 93px; border-bottom: 2px solid #d6d8d9; text-align: left; }
  .place { gap: 24px; padding-top: 18px; }
  .place input { flex: 1; min-width: 0; height: 49px; font-size: 34px; font-weight: 300; outline: none; }
  .pin-icon { width: 22px; height: 30px; margin-left: 1px; fill: #eb4869; }
  .dates { font-weight: 300; padding-bottom: 14px; }
  .calendar { width: 26px; height: 30px; margin-right: 21px; fill: #eb4869; }
  .date { font-size: 29px; line-height: 33px; }
  .date small { display: block; font-size: 26px; }
  .arrow { width: 24px; height: 36px; margin: 0 10px 0 20px; fill: none; stroke: #454c58; stroke-width: 8; stroke-linecap: round; stroke-linejoin: round; }
  .actions { display: flex; justify-content: flex-end; gap: 9px; padding-bottom: 23px; }
  .actions button { display: grid; place-items: center; height: 61px; border: 1px solid #d62d78; fill: #eb4869; }
  .filter { width: 81px; }
  .filter svg { width: 26px; height: 26px; }
  .sort { width: 72px; }
  .sort svg { width: 16px; height: 20px; }

  .results {
    flex: 1;
    min-height: 0;
    display: grid;
    grid-template-columns: 1152fr 1634fr;
    gap: 54px;
    padding: 0 17px 0 9px;
  }
  .list { display: flex; flex-direction: column; gap: 12px; min-height: 0; overflow: hidden; }
  .card {
    flex: none;
    display: flex;
    align-items: center;
    padding: 36px 18px 36px 34px;
    border: 1px solid #f4f4f5;
    color: #707276;
    font-size: 28px;
    line-height: 39px;
  }
  .active { background: #f5f5f5; border-color: #f5f5f5; }
  .dots { width: 10px; height: 32px; margin: 8px 10px 0 0; align-self: flex-start; fill: #8e9293; }
  .details { width: 612px; }
  h2 { font-size: 32px; line-height: 45px; font-weight: 300; }
  h2 a { margin-right: 16px; font-weight: 700; color: #5e98f2; text-decoration: none; }
  .rating { display: inline-flex; align-items: center; gap: 5px; font-size: 28px; line-height: 41px; vertical-align: bottom; white-space: nowrap; }
  .stars { display: inline-flex; gap: 1px; }
  .star { width: 30px; height: 28px; fill: #eac748; stroke: #eac748; stroke-width: 1; stroke-linejoin: round; }
  .half .outline { fill: none; stroke-width: 2.500; }
  .transfer { display: flex; align-items: center; gap: 16px; }
  .extras { white-space: pre-line; }
  .plane { width: 34px; height: 26px; fill: currentColor; }
  b { font-weight: 700; }
  .price { margin-left: auto; font-size: 32px; font-weight: 700; color: #eb4869; }
  .go { margin-left: 32px; }
  .go svg { width: 16px; height: 22px; fill: none; stroke: #eb4869; stroke-width: 4; stroke-linecap: round; stroke-linejoin: round; }

  .map { position: relative; min-height: 0; overflow: hidden; background: #faf8f3; font-family: "Liberation Sans", Arial, sans-serif; }
  .ground { width: 100%; height: 100%; fill: none; stroke-linecap: round; stroke-linejoin: round; }
  .forest { fill: #e9f0df; }
  .thicket { fill: #dde3d3; }
  .village { fill: #f6f2ec; }
  .pond { fill: #cfe0ec; stroke: #cfe0ec; stroke-width: 1; }
  .river { stroke: #d5e4ed; stroke-width: 15; }
  .stream { stroke: #d3e4ef; stroke-width: 4; }
  .border { stroke: #d6cfcd; stroke-width: 2; stroke-dasharray: 4 6; }
  .runway { stroke: #e9e8e7; stroke-width: 8; stroke-linecap: butt; }
  .taxiway { stroke: #eae9e6; stroke-width: 2; }
  .street { stroke: #fff; stroke-width: 2; }
  .minor-edge { stroke: #fcedc4; stroke-width: 7; }
  .minor { stroke: #fff; stroke-width: 4; }
  .main-edge { stroke: #faebbf; stroke-width: 10; }
  .main { stroke: #fdf3d4; stroke-width: 8; }
  .motorway-edge { stroke: #f5dd98; stroke-width: 12; }
  .motorway { stroke: #fbe5a6; stroke-width: 9; }
  .ground text {
    font-family: Inter, "Open Sans", sans-serif;
    font-size: 19px;
    font-weight: 600;
    fill: #4a5b78;
    stroke: #fff;
    stroke-opacity: 0.8;
    stroke-width: 3;
    paint-order: stroke;
    text-anchor: middle;
  }
  .ground .town { font-size: 22px; }
  .ground .cut { text-anchor: end; }

  .marker { position: absolute; width: 72px; height: 90px; }
  .marker svg { width: 72px; height: 90px; }
  .body { fill: #ec4a6a; }
  .airport .body { fill: #5e99f5; }
  .line { fill: none; stroke: #fff; stroke-width: 2; stroke-linecap: round; stroke-linejoin: round; }
  .letter { stroke-width: 3; }

  .zoom {
    position: absolute;
    left: 18px;
    top: 18px;
    width: 48px;
    border-radius: 8px;
    background: #fff;
    box-shadow: 0 2px 10px rgba(0, 0, 0, 0.55);
  }
  .zoom button { display: grid; place-items: center; width: 48px; height: 47px; padding-top: 4px; }
  .zoom button + button { border-top: 1px solid #ccc; }
  .zoom svg { width: 20px; height: 20px; stroke: #333; stroke-width: 3; }

  .popup {
    position: absolute;
    left: 414px;
    top: 9px;
    width: 480px;
    display: flex;
    flex-direction: column;
    align-items: center;
    padding: 26px 0 24px;
    border-radius: 22px;
    background: #fff;
    color: #3c3e42;
    font-weight: 400;
    box-shadow: 0 6px 28px rgba(0, 0, 0, 0.4);
  }
  .popup::after {
    content: "";
    position: absolute;
    top: 100%;
    left: 50%;
    margin: -1px 0 0 -20px;
    border: 20px solid transparent;
    border-top-color: #fff;
    border-bottom: 0;
  }
  .close { position: absolute; right: 10px; top: 13px; }
  .close svg { width: 18px; height: 18px; stroke: #c3c3c3; stroke-width: 5; }
  h3 { margin-right: 6px; font-size: 26px; line-height: 34px; font-weight: 700; }
  .score { display: flex; align-items: center; gap: 5px; font-size: 19px; line-height: 36px; color: #77797d; }
  .score .star { width: 20px; height: 19px; }
  .shuttle { display: flex; align-items: center; gap: 14px; margin-right: 16px; font-size: 22px; line-height: 24px; }
  .shuttle .plane { width: 27px; height: 21px; }
  .features { font-size: 19px; line-height: 32px; color: #77797d; }
  .cost { margin: 14px 0 17px; font-size: 22px; line-height: 32px; font-weight: 700; color: #eb4869; }
  .book {
    width: 154px;
    height: 62px;
    border-radius: 31px;
    background: #d62d78;
    color: #fff;
    font-family: Inter, sans-serif;
    font-size: 24px;
    font-weight: 300;
  }

  .haze {
    position: absolute;
    left: 0;
    right: 0;
    bottom: 0;
    height: 56px;
    pointer-events: none;
    background: linear-gradient(rgba(60, 50, 45, 0), rgba(60, 50, 45, 0.03) 50%, rgba(60, 50, 45, 0.09));
  }
</style>
